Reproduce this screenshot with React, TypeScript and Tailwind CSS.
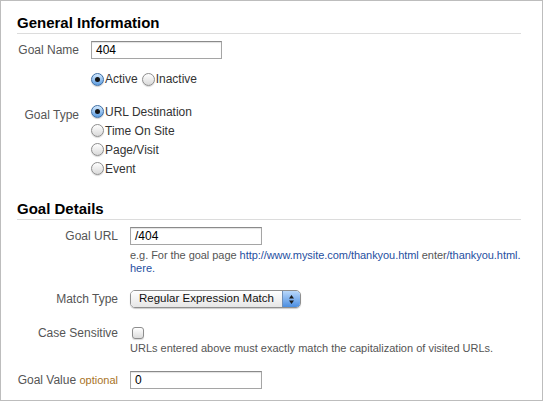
import React from "react";

const Radio = ({ checked }: { checked?: boolean }) =>
  checked ? (
    <span className="flex w-[13px] h-[13px] shrink-0 items-center justify-center rounded-full border border-[#3f6ea3] bg-linear-to-b from-[#d4eaff] to-[#5d9de0] shadow-[0_1px_1px_rgba(0,0,0,0.2)]">
      <span className="block w-[5px] h-[5px] rounded-full bg-[#151515]" />
    </span>
  ) : (
    <span className="block w-[13px] h-[13px] shrink-0 rounded-full border border-[#8d8d8d] bg-linear-to-b from-[#ffffff] to-[#d9d9d9] shadow-[0_1px_1px_rgba(0,0,0,0.15)]" />
  );

const Input = ({ value, w }: { value: string; w: string }) => (
  <div
    className={`${w} h-[18px] border border-[#a5a5a5] border-t-[#8a8a8a] bg-white shadow-[inset_0_1px_1px_rgba(0,0,0,0.12)] pl-[4px] text-[12px] leading-[16px] text-black`}
  >
    {value}
  </div>
);

export default function App() {
  return (
    <div className="w-[543px] h-[401px] border border-[#bdbdbd] bg-white pl-[16px] pr-[21px] pt-[11px] font-['Liberation_Sans',Arial,sans-serif] text-[#555]">
      <h2 className="text-[15px] font-bold leading-[21px] text-black border-b border-[#dcdcdc]">
        General Information
      </h2>

      <div className="mt-[7px] flex items-center h-[18px] gap-[12px]">
        <div className="w-[62px] text-right text-[12px] leading-[15px]">Goal Name</div>
        <Input value="404" w="w-[131px]" />
      </div>

      <div className="mt-[12px] flex items-center h-[16px] pl-[74px] text-[12px] text-[#333]">
        <Radio checked />
        <span className="ml-px">Active</span>
        <span className="ml-[4px]">
          <Radio />
        </span>
        <span className="ml-px">Inactive</span>
      </div>

      <div className="mt-[15px] flex gap-[12px]">
        <div className="w-[62px] text-right text-[12px] leading-[15px] mt-[6px]">Goal Type</div>
        <div className="flex flex-col text-[12px] text-[#333]">
          {["URL Destination", "Time On Site", "Page/Visit", "Event"].map((t, i) => (
            <div key={t} className="flex items-center h-[19px]">
              <Radio checked={i === 0} />
              <span className="ml-px">{t}</span>
            </div>
          ))}
        </div>
      </div>

      <h2 className="mt-[20px] text-[15px] font-bold leading-[21px] text-black border-b border-[#dcdcdc]">
        Goal Details
      </h2>

      <div className="mt-[7px] flex items-center h-[18px] gap-[12px]">
        <div className="w-[101px] text-right text-[12px] leading-[15px]">Goal URL</div>
        <Input value="/404" w="w-[132px]" />
      </div>
      <div className="mt-[4px] pl-[113px] text-[11px] leading-[13px] text-[#555]">
        <div className="whitespace-nowrap tracking-[-0.05px]">
          e.g. For the goal page{" "}
          <span className="text-[#1f4f9f]">http://www.mysite.com/thankyou.html</span> enter
          <span className="text-[#1f4f9f]">/thankyou.html.</span>
        </div>
        <div className="text-[#1f4f9f]">here.</div>
      </div>

      <div className="mt-[15px] flex items-center h-[18px] gap-[12px]">
        <div className="w-[101px] text-right text-[12px] leading-[15px]">Match Type</div>
        <div className="flex w-[171px] h-[18px] rounded-[5px] border border-[#8f8f8f] overflow-hidden shadow-[0_1px_1px_rgba(0,0,0,0.2)]">
          <div className="flex-1 flex items-center pl-[8px] bg-linear-to-b from-[#ffffff] to-[#e6e6e6] text-[11.5px] text-[#111]">
            Regular Expression Match
          </div>
          <div className="w-[18px] flex items-center justify-center border-l border-[#6f8fb8] bg-linear-to-b from-[#b9d8fb] to-[#4b8ee0]">
            <svg width="7" height="11" viewBox="0 0 7 11">
              <path d="M3.5 1 L6 4.5 H1 Z" fill="#1a1a1a" />
              <path d="M3.5 10 L6 6.5 H1 Z" fill="#1a1a1a" />
            </svg>
          </div>
        </div>
      </div>

      <div className="mt-[17px] flex items-center h-[16px] gap-[12px]">
        <div className="w-[101px] text-right text-[12px] leading-[15px]">Case Sensitive</div>
        <span className="block ml-[2px] w-[12px] h-[12px] rounded-[3px] border border-[#8d8d8d] bg-linear-to-b from-[#ffffff] to-[#dcdcdc] shadow-[0_1px_1px_rgba(0,0,0,0.15)]" />
      </div>
      <div className="mt-[1px] pl-[113px] text-[11px] leading-[13px] text-[#555]">
        URLs entered above must exactly match the capitalization of visited URLs.
      </div>

      <div className="mt-[16px] flex items-center h-[18px] gap-[12px]">
        <div className="w-[101px] text-right text-[12px] leading-[15px] whitespace-nowrap">
          Goal Value <span className="text-[11px] text-[#a8731f]">optional</span>
        </div>
        <Input value="0" w="w-[132px]" />
      </div>
    </div>
  );
}
